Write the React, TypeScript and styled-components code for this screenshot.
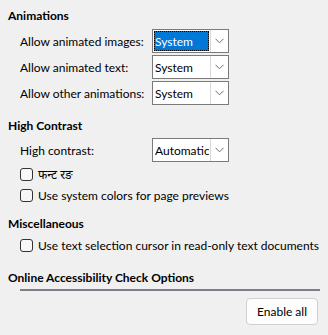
import React from "react"
import styled, { createGlobalStyle } from "styled-components"

const GlobalStyle = createGlobalStyle`
  html, body {
    margin: 0;
    padding: 0;
    background: #f0f0f0;
  }
  body {
    font-family: Lato, "Noto Sans", sans-serif;
    font-size: 12px;
    color: #000;
  }
`

type ComboRow = { label: string; value: string; selected?: boolean }

const animationRows: ComboRow[] = [
  { label: "Allow animated images:", value: "System", selected: true },
  { label: "Allow animated text:", value: "System" },
  { label: "Allow other animations:", value: "System" },
]

const Chevron: React.FC = () => (
  <svg width="9" height="6" viewBox="0 0 9 6">
    <path d="M0.5 0.8 L4.5 4.8 L8.5 0.8" fill="none" stroke="#6b6b6b" strokeWidth="1" />
  </svg>
)

const Combo: React.FC<{ value: string; selected?: boolean }> = ({ value, selected }) => (
  <S.Combo>
    <S.ComboText selected={selected}>{value}</S.ComboText>
    <S.ComboButton>
      <Chevron />
    </S.ComboButton>
  </S.Combo>
)

const Check: React.FC<{ label: string }> = ({ label }) => (
  <S.CheckRow>
    <S.Box />
    <span>{label}</span>
  </S.CheckRow>
)

export default function App() {
  return (
    <S.Page>
      <GlobalStyle />
      <S.Heading>Animations</S.Heading>
      <S.ComboList top={5}>
        {animationRows.map(({ label, value, selected }) => (
          <S.ComboLine key={label}>
            <S.Label>{label}</S.Label>
            <Combo value={value} selected={selected} />
          </S.ComboLine>
        ))}
      </S.ComboList>

      <S.Heading top={13}>High Contrast</S.Heading>
      <S.ComboList top={4}>
        <S.ComboLine>
          <S.Label>High contrast:</S.Label>
          <Combo value="Automatic" />
        </S.ComboLine>
      </S.ComboList>
      <S.Checks top={2}>
        <Check label="फन्ट रङ" />
        <Check label="Use system colors for page previews" />
      </S.Checks>

      <S.Heading top={10}>Miscellaneous</S.Heading>
      <S.Checks top={3}>
        <Check label="Use text selection cursor in read-only text documents" />
      </S.Checks>

      <S.Heading top={14}>Online Accessibility Check Options</S.Heading>
      <S.Separator />
      <S.Actions>
        <S.Button>Enable all</S.Button>
      </S.Actions>
    </S.Page>
  )
}

const S = {
  Page: styled.div`
    display: flex;
    flex-direction: column;
    padding: 8px 8px 0 8px;
    width: 328px;
    height: 335px;
    box-sizing: border-box;
  `,
  Heading: styled.div<{ top?: number }>`
    font-weight: 700;
    font-size: 12px;
    line-height: 16px;
    height: 16px;
    margin-top: ${({ top }) => top || 0}px;
  `,
  ComboList: styled.div<{ top?: number }>`
    display: flex;
    flex-direction: column;
    gap: 2px;
    margin-top: ${({ top }) => top || 0}px;
    padding-left: 12px;
  `,
  ComboLine: styled.div`
    display: grid;
    grid-template-columns: 132px 77px;
    align-items: center;
    height: 24px;
  `,
  Label: styled.span`
    white-space: nowrap;
  `,
  Combo: styled.div`
    display: flex;
    height: 24px;
    box-sizing: border-box;
    border: 1px solid #7a7a7a;
    background: #fff;
  `,
  ComboText: styled.div<{ selected?: boolean }>`
    flex: 1;
    display: flex;
    align-items: center;
    padding-left: 1px;
    margin: 1px 0 1px 1px;
    overflow: hidden;
    white-space: nowrap;
    background: ${({ selected }) => (selected ? "#0078d7" : "transparent")};
    color: ${({ selected }) => (selected ? "#fff" : "#000")};
    outline: ${({ selected }) => (selected ? "1px dotted #000" : "none")};
    outline-offset: -1px;
  `,
  ComboButton: styled.div`
    width: 17px;
    display: flex;
    align-items: center;
    justify-content: center;
    border-left: 1px solid #d9d9d9;
    margin-left: 1px;
  `,
  Checks: styled.div<{ top?: number }>`
    display: flex;
    flex-direction: column;
    margin-top: ${({ top }) => top || 0}px;
    padding-left: 12px;
  `,
  CheckRow: styled.div`
    display: flex;
    align-items: center;
    gap: 5px;
    height: 21px;
    white-space: nowrap;
  `,
  Box: styled.span`
    width: 13px;
    height: 13px;
    box-sizing: border-box;
    border: 1px solid #333;
    border-radius: 3px;
    background: #f7f7f7;
    flex: none;
  `,
  Separator: styled.div`
    height: 2px;
    background: #7b7f88;
    margin: 3px 0 0 12px;
  `,
  Actions: styled.div`
    display: flex;
    justify-content: flex-end;
    margin-top: 7px;
    padding-right: 2px;
  `,
  Button: styled.div`
    width: 72px;
    height: 27px;
    box-sizing: border-box;
    display: flex;
    align-items: center;
    justify-content: center;
    background: #fdfdfd;
    border: 1px solid #d0d0d0;
    border-radius: 4px;
  `,
}
